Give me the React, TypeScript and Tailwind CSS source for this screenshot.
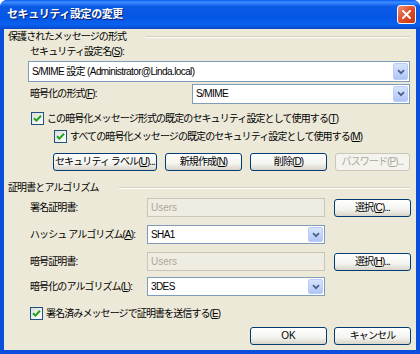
import React from "react";

function Checkbox() {
  return (
    <span className="w-[13px] h-[13px] border border-[#1C5180] bg-[linear-gradient(135deg,#DCDCD7,#FFFFFF)] flex items-center justify-center shrink-0">
      <svg width="9" height="9" viewBox="0 0 9 9">
        <path d="M1 4.2 L3.4 6.6 L8 1.8" stroke="#21A121" strokeWidth="2" fill="none" />
      </svg>
    </span>
  );
}

function Btn({ children, w, disabled }: { children: React.ReactNode; w: string; disabled?: boolean }) {
  return (
    <div
      className={
        "h-[18px] rounded-[3px] border flex items-center justify-center shrink-0 " +
        w +
        (disabled
          ? " border-[#C9C7BA] bg-[#F4F3EE] text-[#ACA899]"
          : " border-[#003C74] bg-[linear-gradient(180deg,#FFFFFF_0%,#F3F3EF_60%,#D8D4C9_100%)] text-black")
      }
    >
      {children}
    </div>
  );
}

function Combo({ text, w, h }: { text: string; w: string; h: string }) {
  return (
    <div className={"flex items-stretch bg-white border border-[#7F9DB9] shrink-0 " + w + " " + h}>
      <span className="flex-1 flex items-center pl-[3px] tracking-[-0.6px]">{text}</span>
      <div className="w-[15px] m-[1px] rounded-[2px] border border-[#B9CDF7] bg-[linear-gradient(180deg,#D7E3FC_0%,#C1D3FB_60%,#AFC4F5_100%)] flex items-center justify-center">
        <svg width="8" height="6" viewBox="0 0 8 6">
          <path d="M1 1.2 L4 4.2 L7 1.2" stroke="#4D6185" strokeWidth="1.8" fill="none" />
        </svg>
      </div>
    </div>
  );
}

function Disabled({ text }: { text: string }) {
  return (
    <div className="w-[178px] h-[19px] border border-[#C9C7BA] bg-[#EFEDE2] text-[#ACA899] flex items-center pl-[3px] shrink-0 tracking-normal">
      {text}
    </div>
  );
}

function GroupHeader({ title, className }: { title: string; className?: string }) {
  return (
    <div className={"h-[14px] flex items-center pl-[4px] pr-[6px] " + (className ?? "")}>
      <span>{title}</span>
      <div className="flex-1 ml-[20px] border-t border-b border-t-[#D0D0BF] border-b-white" />
    </div>
  );
}

export default function App() {
  return (
    <div className="w-[420px] h-[354px] bg-[#0A4FDB] flex flex-col rounded-t-[7px] overflow-hidden font-['Liberation_Sans','Noto_Sans_CJK_JP',sans-serif] text-[10px] tracking-[-0.9px] text-black leading-none whitespace-nowrap">
      {/* title bar */}
      <div className="h-[29px] flex items-center pl-[7px] pr-[4px] bg-[linear-gradient(180deg,#0A5FEF_0%,#3D8BFF_8%,#0B5AE6_22%,#0456E4_60%,#0A61F0_85%,#0648C8_100%)]">
        <span className="text-white font-bold text-[11px] tracking-[-0.4px] [text-shadow:1px_1px_0_#0A1E6E]">
          セキュリティ設定の変更
        </span>
        <div className="ml-auto w-[19px] h-[19px] rounded-[3px] border border-white bg-[linear-gradient(135deg,#F0917A_0%,#E0512F_45%,#C2350F_100%)] flex items-center justify-center">
          <svg width="11" height="11" viewBox="0 0 11 11">
            <path d="M2 2 L9 9 M9 2 L2 9" stroke="#FFFFFF" strokeWidth="2" strokeLinecap="round" />
          </svg>
        </div>
      </div>

      {/* body */}
      <div className="mx-[4px] mb-[4px] flex-1 bg-[#ECE9D8] flex flex-col pt-[1px]">
        <GroupHeader title="保護されたメッセージの形式" />
        <div className="mt-[1px] h-[14px] flex items-center pl-[26px]">
          セキュリティ設定名(<u>S</u>):
        </div>
        <div className="mt-[2px] ml-[24px]">
          <Combo text="S/MIME 設定 (Administrator@Linda.local)" w="w-[382px]" h="h-[21px]" />
        </div>
        <div className="mt-[2px] h-[20px] flex items-center">
          <span className="w-[188px] pl-[26px]">
            暗号化の形式(<u>F</u>):
          </span>
          <Combo text="S/MIME" w="w-[218px]" h="h-[20px]" />
        </div>
        <div className="mt-[8px] h-[13px] flex items-center gap-[3px] pl-[27px]">
          <Checkbox />
          <span>
            この暗号化メッセージ形式の既定のセキュリティ設定として使用する(<u>T</u>)
          </span>
        </div>
        <div className="mt-[5px] h-[13px] flex items-center gap-[3px] pl-[50px]">
          <Checkbox />
          <span>
            すべての暗号化メッセージの既定のセキュリティ設定として使用する(<u>M</u>)
          </span>
        </div>
        <div className="mt-[10px] flex items-center gap-[8px] pl-[49px]">
          <Btn w="w-[104px]">
            <span>
              セキュリティ ラベル(<u>U</u>)...
            </span>
          </Btn>
          <Btn w="w-[77px]">
            <span>
              新規作成(<u>N</u>)
            </span>
          </Btn>
          <Btn w="w-[77px]">
            <span>
              削除(<u>D</u>)
            </span>
          </Btn>
          <Btn w="w-[75px]" disabled>
            <span>
              パスワード(<u>P</u>)...
            </span>
          </Btn>
        </div>

        <GroupHeader title="証明書とアルゴリズム" className="mt-[10px]" />
        <div className="mt-[3px] h-[19px] flex items-center">
          <span className="w-[143px] pl-[26px]">署名証明書:</span>
          <Disabled text="Users" />
          <div className="ml-[9px]">
            <Btn w="w-[77px]">
              <span>
                選択(<u>C</u>)...
              </span>
            </Btn>
          </div>
        </div>
        <div className="mt-[8px] h-[19px] flex items-center">
          <span className="w-[143px] pl-[26px]">
            ハッシュ アルゴリズム(<u>A</u>):
          </span>
          <Combo text="SHA1" w="w-[178px]" h="h-[19px]" />
        </div>
        <div className="mt-[8px] h-[19px] flex items-center">
          <span className="w-[143px] pl-[26px]">暗号証明書:</span>
          <Disabled text="Users" />
          <div className="ml-[9px]">
            <Btn w="w-[77px]">
              <span>
                選択(<u>H</u>)...
              </span>
            </Btn>
          </div>
        </div>
        <div className="mt-[6px] h-[19px] flex items-center">
          <span className="w-[143px] pl-[26px]">
            暗号化のアルゴリズム(<u>L</u>):
          </span>
          <Combo text="3DES" w="w-[178px]" h="h-[19px]" />
        </div>
        <div className="mt-[11px] h-[13px] flex items-center gap-[3px] pl-[26px]">
          <Checkbox />
          <span>
            署名済みメッセージで証明書を送信する(<u>E</u>)
          </span>
        </div>
        <div className="mt-[7px] flex justify-end gap-[7px] pr-[5px]">
          <Btn w="w-[77px]">
            <span className="tracking-normal">OK</span>
          </Btn>
          <Btn w="w-[77px]">キャンセル</Btn>
        </div>
      </div>
    </div>
  );
}
